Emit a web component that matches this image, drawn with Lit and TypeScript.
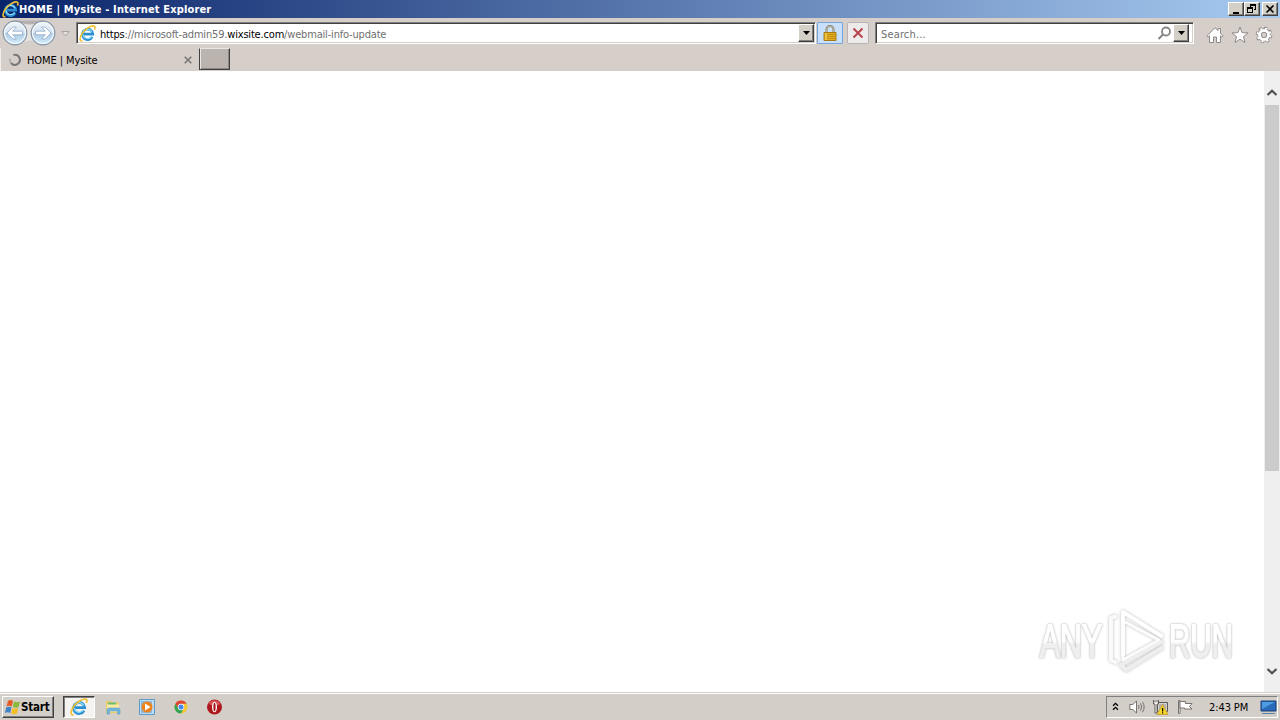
import { css, html, svg, LitElement } from 'lit'
import { customElement } from 'lit/decorators.js'

const ieLogo = (size: number) => html`
  <svg width=${size} height=${size} viewBox="0 0 18 18" fill="none">
    <path d="M14 12.500A5.500 5.500 0 1 1 14.600 9.600H5.200" stroke="#2a8fd0" stroke-width="2.800"/>
    <path d="M13.400 12A5 5 0 0 1 4.200 10.200M4.400 7.600A5 5 0 0 1 13.700 7.800" stroke="#8ad8f8" stroke-width="1.300"/>
    <path d="M3.600 16.800C.4 17.600.4 13.600 3 9.400 6.200 4.200 12.800.3 15.800 1.100c1.500.4 1.400 2 .5 3.800" stroke="#f0c132" stroke-width="1.700"/>
  </svg>`

const downArrow = html`<svg width="7" height="4"><path d="M0 0h7L3.5 4z" fill="#000"/></svg>`

@customElement('title-bar')
export class TitleBar extends LitElement {
  static styles = css`
    :host {
      display: flex;
      align-items: center;
      height: 18px;
      padding: 0 2px 0 2px;
      box-sizing: border-box;
      background: linear-gradient(90deg, #0a246a, #a6caf0);
      color: #fff;
    }
    svg { display: block; flex: none; }
    .title {
      flex: 1;
      font-weight: bold;
      font-size: 11px;
      letter-spacing: 0.14px;
      white-space: pre;
    }
    .button {
      width: 16px;
      height: 14px;
      box-sizing: border-box;
      background: #d4d0c8;
      border: 1px solid;
      border-color: #fff #404040 #404040 #fff;
      box-shadow: inset -1px -1px #808080;
      display: grid;
      place-items: center;
    }
    .close { margin-left: 2px; }
  `
  render() {
    return html`
      ${ieLogo(17)}
      <span class="title">HOME | Mysite - Internet Explorer</span>
      <span class="button"><svg width="10" height="10"><path d="M2 8h6v2H2z"/></svg></span>
      <span class="button"><svg width="10" height="10" fill="none" stroke="#000" shape-rendering="crispEdges"><path d="M3.500 3V.5h5v5H7M3 1.500h6M.5 3.500h5v5h-5zM1 4.500h5"/></svg></span>
      <span class="button close"><svg width="10" height="10"><path d="M1.500 1.500l7 7m0-7l-7 7" stroke="#000" stroke-width="1.600"/></svg></span>`
  }
}

@customElement('nav-bar')
export class NavBar extends LitElement {
  static styles = css`
    :host {
      display: flex;
      align-items: flex-start;
      height: 30px;
      padding: 4px 0 0 2px;
      box-sizing: border-box;
      font-size: 11px;
      color: #6f6f6f;
    }
    svg { display: block; flex: none; }
    .arrows { margin-top: -3px; }
    .history { margin: 9px 6px 0 3px; }
    .field {
      display: flex;
      align-items: center;
      height: 22px;
      flex: none;
      box-sizing: border-box;
      background: #fff;
      border: 1px solid;
      border-color: #808080 #fff #fff #808080;
      box-shadow: inset 1px 1px #404040, inset -1px -1px #d4d0c8;
    }
    .address { width: 740px; padding: 0 1px 0 2px; }
    .url {
      flex: 1;
      margin-left: 4px;
      padding-top: 2px;
      letter-spacing: -0.18px;
      white-space: nowrap;
    }
    .url b { font-weight: normal; color: #000; }
    .drop {
      width: 16px;
      height: 18px;
      box-sizing: border-box;
      display: grid;
      place-items: center;
      background: #d4d0c8;
      border: 1px solid;
      border-color: #fff #404040 #404040 #fff;
      box-shadow: inset -1px -1px #808080;
    }
    .lock, .stop {
      display: grid;
      place-items: center;
      flex: none;
      box-sizing: border-box;
      height: 22px;
      border-radius: 1px;
    }
    .lock { width: 26px; margin-left: 1px; background: #c8e0fa; border: 1px solid #75a5db; }
    .stop { width: 22px; margin: 0 6px 0 4px; background: #edeaeb; border: 1px solid #b8b4b3; border-radius: 2px; }
    .search { width: 319px; padding: 0 4px 0 5px; }
    .hint { flex: 1; padding-top: 2px; letter-spacing: 0.15px; }
    .glass { margin-right: 1px; }
    .tools { display: flex; gap: 6.5px; margin: 4px 0 0 12px; }
  `
  // round glass button, cx is its centre within the pair
  roundButton(cx: number, flip: boolean) {
    return svg`
      <circle cx=${cx} cy="14" r="11.800" fill="url(#glass)" stroke="#8494a5" stroke-width="1.200"/>
      <circle cx=${cx} cy="14" r="10.500" fill="none" stroke="#f1f7fc" stroke-width="1.200"/>
      <path transform=${`translate(${cx} 14)${flip ? ' scale(-1 1)' : ''}`}
        d="M-8 0l6-6h3.400L-2.300-1.800H7.500v3.600H-2.300L1.400 6H-2z" fill="#fff" stroke="#8eabc9" stroke-width=".8"/>`
  }
  render() {
    return html`
      <svg class="arrows" width="56" height="28">
        <defs>
          <linearGradient id="glass" x1="0" y1="0" x2="0" y2="1">
            <stop offset="0" stop-color="#f3f7fb"/>
            <stop offset=".48" stop-color="#d2e0ef"/>
            <stop offset=".52" stop-color="#b1c9e2"/>
            <stop offset="1" stop-color="#d2effd"/>
          </linearGradient>
        </defs>
        <path d="M13 1.500h28v8H13z" fill="#b6b1b1"/>
        <path d="M20 4q8 3 15 0v20q-7-5-15 0z" fill="#e6e3e3"/>
        ${this.roundButton(13, false)}
        ${this.roundButton(41, true)}
      </svg>
      <svg class="history" width="9" height="6"><path d="M.8.5h7.400L4.500 5z" fill="#e4e0de" stroke="#aaa5a3"/></svg>
      <div class="field address">
        ${ieLogo(17)}
        <span class="url"><b>https</b>://microsoft-admin59.<b>wixsite.com</b>/webmail-info-update</span>
        <span class="drop">${downArrow}</span>
      </div>
      <span class="lock">
        <svg width="14" height="17">
          <path d="M3.500 8V4.500a3.500 3.500 0 0 1 7 0V8" fill="none" stroke="#827c63" stroke-width="2"/>
          <path d="M3.500 8V4.500a3.500 3.500 0 0 1 7 0V8" fill="none" stroke="#d2ceb4" stroke-width=".7"/>
          <path d="M1 7.500h12v8H1z" fill="#e4ae1d" stroke="#a67a12"/>
          <path d="M2 9.500h10M2 11.500h10M2 13.500h10" stroke="#b98513" stroke-width=".8"/>
          <path d="M3 8v7" stroke="#ffe27b"/>
        </svg>
      </span>
      <span class="stop">
        <svg width="12" height="12"><path d="M1.500 1.500l9 9m0-9l-9 9" stroke="#b9444d" stroke-width="2"/></svg>
      </span>
      <div class="field search">
        <span class="hint">Search...</span>
        <svg class="glass" width="15" height="15" fill="none" stroke="#858585"><circle cx="9" cy="5.500" r="4" stroke-width="1.800"/><path d="M6 8.500L1.500 13" stroke-width="2"/></svg>
        <span class="drop">${downArrow}</span>
      </div>
      <div class="tools">
        <svg width="18" height="18" fill="#fff" stroke="#8e8a89"><path d="M1 9.800L9 1.700l3 2.900V2.500h2.500v4.700L17 9.800l-1.200 1.200-1.300-1.200v6.700h-4V11h-3v5.500h-4V9.800L2.200 11z"/></svg>
        <svg width="18" height="18" fill="#fff" stroke="#8e8a89"><path d="M9 1.200l2.100 5.500 6 .2-4.700 3.700 1.600 5.900L9 13.200l-5 3.300 1.600-5.900L.9 6.900l6-.2z"/></svg>
        <svg width="18" height="18" fill="none">
          <circle cx="9" cy="9" r="6.600" stroke="#8e8a89" stroke-width="3.400" stroke-dasharray="2.900 2.280"/>
          <circle cx="9" cy="9" r="4.900" stroke="#8e8a89" stroke-width="3.600"/>
          <circle cx="9" cy="9" r="6.200" stroke="#fff" stroke-width="2.500" stroke-dasharray="1.900 2.970" stroke-dashoffset="-.3"/>
          <circle cx="9" cy="9" r="4.500" stroke="#fff" stroke-width="2.800"/>
          <circle cx="9" cy="9" r="2.700" stroke="#8e8a89" stroke-width=".9"/>
        </svg>
      </div>`
  }
}

@customElement('tab-strip')
export class TabStrip extends LitElement {
  static styles = css`
    :host {
      display: flex;
      height: 23px;
      box-sizing: border-box;
      font-size: 11px;
      color: #000;
    }
    svg { display: block; flex: none; }
    .tab {
      display: flex;
      align-items: center;
      width: 199px;
      box-sizing: border-box;
      padding: 1px 7px 0 8px;
      border-left: 1px solid #f2efed;
    }
    .name { flex: 1; margin-left: 6px; padding-top: 1px; letter-spacing: -0.1px; }
    .new {
      width: 31px;
      height: 22px;
      box-sizing: border-box;
      background: #bab3ae;
      border: 1px solid;
      border-color: #e9e6e4 #404040 #404040;
      box-shadow: inset 1px 0 #e9e6e4, inset -1px -1px #8c8784;
    }
  `
  render() {
    return html`
      <div class="tab">
        <svg width="12" height="14" fill="none" stroke-width="2"><path d="M4.500 2A5 5 0 1 1 2 10" stroke="#777"/><path d="M2 10A5 5 0 0 1 1.200 5.500" stroke="#b5b0ae"/></svg>
        <span class="name">HOME | Mysite</span>
        <svg width="8" height="8"><path d="M.7.7l6.600 6.600m0-6.600L.7 7.300" stroke="#7c7775" stroke-width="1.600"/></svg>
      </div>
      <span class="new"></span>`
  }
}

@customElement('page-view')
export class PageView extends LitElement {
  static styles = css`
    :host {
      position: relative;
      display: flex;
      justify-content: flex-end;
      background: #fff;
    }
    svg { display: block; }
    .scrollbar {
      display: flex;
      flex-direction: column;
      align-items: center;
      width: 16px;
      box-sizing: border-box;
      background: #efefef;
      padding: 18px 0 17px;
    }
    .thumb { width: 14px; height: 366px; margin-top: 9px; background: #cbcbcb; }
    .down { margin-top: auto; }
    .watermark {
      position: absolute;
      right: 33px;
      bottom: 13px;
    }
    .letters {
      font: 47px 'Liberation Sans', sans-serif;
      fill: url(#fade);
      stroke: url(#fade);
      stroke-width: 1.8;
    }
    .play { filter: drop-shadow(0 0 1.5px #b8b8b8); }
    .soft { filter: drop-shadow(0 0 1.3px #a8a8a8); }
  `
  render() {
    return html`
      <svg class="watermark" width="220" height="76">
        <defs>
          <linearGradient id="fade" x1="0" y1="0" x2="0" y2="1">
            <stop offset=".52" stop-color="#fff"/>
            <stop offset=".56" stop-color="#efefef"/>
          </linearGradient>
        </defs>
        <g class="soft">
          <text class="letters" transform="translate(13 54) scale(.62 1)" textLength="100" lengthAdjust="spacingAndGlyphs">ANY</text>
          <text class="letters" transform="translate(142 54) scale(.62 1)" textLength="103" lengthAdjust="spacingAndGlyphs">RUN</text>
        </g>
        <g class="play" fill="none" stroke-width="4" stroke-linejoin="round">
          <path d="M90 13l-6 2v42l6 3" stroke="#fafafa"/>
          <path d="M96 53V9l40 25" stroke="#fff"/>
          <path d="M96 18l36 19-36 20z" stroke="#fdfdfd" stroke-width="3"/>
          <path d="M136 38L94 62l5 5 37-23" stroke="#eee"/>
        </g>
      </svg>
      <div class="scrollbar">
        <svg width="12" height="7" fill="none" stroke="#505050" stroke-width="2.200"><path d="M1.500 6L6 1.700 10.500 6"/></svg>
        <span class="thumb"></span>
        <svg class="down" width="12" height="7" fill="none" stroke="#505050" stroke-width="2.200"><path d="M1.500 1L6 5.300 10.500 1"/></svg>
      </div>`
  }
}

@customElement('task-bar')
export class TaskBar extends LitElement {
  static styles = css`
    :host {
      display: flex;
      align-items: flex-start;
      height: 28px;
      padding: 4px 2px 0;
      box-sizing: border-box;
      border-top: 1px solid #d4d0c8;
      box-shadow: inset 0 1px #fff;
      background: #d4cec8;
      font-size: 11px;
      color: #000;
    }
    svg { display: block; flex: none; }
    .start {
      display: flex;
      align-items: center;
      width: 52px;
      height: 22px;
      margin-top: -1px;
      padding-left: 1px;
      box-sizing: border-box;
      border: 1px solid;
      border-color: #fff #404040 #404040 #fff;
      box-shadow: inset -1px -1px #808080;
      font-weight: bold;
      font-size: 11.5px;
      letter-spacing: -0.2px;
    }
    .active {
      display: grid;
      place-items: center;
      width: 32px;
      height: 22px;
      margin: -1px 0 0 9px;
      box-sizing: border-box;
      background: #f5f3f2;
      border: 1px solid;
      border-color: #404040 #fff #fff #404040;
      box-shadow: inset 1px 1px #808080;
    }
    .pinned { display: flex; gap: 18px; margin: 2px auto 0 10px; }
    .tray {
      display: flex;
      align-items: center;
      width: 172px;
      height: 22px;
      margin-top: -1px;
      padding: 0 0 0 5px;
      box-sizing: border-box;
      border: 1px solid;
      border-color: #808080 #fff #fff #808080;
    }
    .chevrons { margin-bottom: 2px; }
    .speaker { margin-left: 10px; }
    .network { margin-left: 7px; }
    .flag { margin-left: 8px; }
    .clock { margin: 0 auto 0 16px; letter-spacing: -0.1px; white-space: nowrap; }
  `
  render() {
    return html`
      <div class="start">
        <svg width="17" height="17">
          <path d="M4 2Q6 0 9 2L7.800 7.500Q5 6 2.500 7.500z" fill="#e65a25"/>
          <path d="M10 2.500Q13 4 16 2.300L14.500 8Q12 9.500 8.800 7.800z" fill="#8ab83b"/>
          <path d="M2.200 8.500Q5 7 7.500 8.500L6.200 14Q3.500 12.500 1 14z" fill="#3f83cb"/>
          <path d="M8.500 8.800Q11.500 10.500 14.200 9L13 14.500Q10 16 7.200 14.300z" fill="#f5bd28"/>
        </svg>
        Start
      </div>
      <div class="active">${ieLogo(18)}</div>
      <div class="pinned">
        <svg width="16" height="16">
          <path d="M1 2h5l1 1.500h7V14H1z" fill="#e9cd69"/>
          <path d="M3 3.500h8V6H3z" fill="#68bd70"/>
          <path d="M2 5.500h12V13H2z" fill="#f9e9a5"/>
          <path d="M2 15v-4q0-2 2-2h9q2 0 2 2v4h-2.500v-3h-8v3z" fill="#72b7df" stroke="#4b94c3" stroke-width=".5"/>
        </svg>
        <svg width="16" height="16">
          <path d="M.5.500h15v15H.5z" fill="#bfdcf2" stroke="#5a9bca"/>
          <path d="M2 2h11v12H2z" fill="#8cb9dc"/>
          <circle cx="8" cy="8" r="5.500" fill="#ee831c"/>
          <path d="M6 4.500L11.500 8 6 11.500z" fill="#fff"/>
        </svg>
        <svg width="16" height="16">
          <circle cx="8" cy="8" r="6.500" fill="#f5c934"/>
          <path d="M2.370 4.750A6.500 6.500 0 0 1 13.630 4.750H8L5.200 9.600z" fill="#dc4637"/>
          <path d="M2.370 4.750A6.500 6.500 0 0 0 8 14.500L10.800 9.600H5.200z" fill="#35a357"/>
          <circle cx="8" cy="8" r="3.200" fill="#fff"/>
          <circle cx="8" cy="8" r="2.500" fill="#4385e8"/>
        </svg>
        <svg width="16" height="16">
          <circle cx="7.500" cy="8" r="7.500" fill="#ad171d"/>
          <path d="M1.500 5a6.700 6.700 0 0 1 12 0Q7.500 8 1.500 5z" fill="#d55356"/>
          <ellipse cx="7.500" cy="8" rx="2.500" ry="5.300" fill="#fff"/>
          <ellipse cx="7.500" cy="8" rx="1.100" ry="4.300" fill="#a5151b"/>
        </svg>
      </div>
      <div class="tray">
        <svg class="chevrons" width="7" height="9" fill="none" stroke="#000" stroke-width="1.300"><path d="M1 3.800L3.500 1.300 6 3.800M1 7.800l2.500-2.500L6 7.800"/></svg>
        <svg class="speaker" width="16" height="16" fill="none" stroke="#77726f"><path d="M.8 5.500h3L7.500 2v12L3.800 10.500h-3z" fill="#fff"/><path d="M9.500 6q1.300 2 0 4M11.500 4.300q2.500 3.700 0 7.400M13.500 2.800q3.300 5.200 0 10.400"/></svg>
        <svg class="network" width="17" height="16">
          <path d="M5.500 3.500h10v9h-10z" fill="#d5d3d0" stroke="#5b5855"/>
          <path d="M7 5h7v6H7z" fill="#b8b5b0"/>
          <path d="M1.500 1v4h1.500v9h2V5h1.500V1M3 1v2.500M5 1v2.500" fill="#fff" stroke="#615d5a"/>
          <path d="M10.500 5.500l5.500 10H5z" fill="#f8d82e" stroke="#b9941d" stroke-width=".7"/>
          <path d="M10 9h1.200v3.500H10zM10 13.300h1.200v1.200H10z"/>
        </svg>
        <svg class="flag" width="16" height="16" fill="#fff" stroke="#77726f"><path d="M1.500 1.500h1.500v13H1.500z"/><path d="M3 2.500h5.500v2H15l-2.500 3 2.500 2.500H7.500v-1H3z"/></svg>
        <span class="clock">2:43 PM</span>
        <svg width="17" height="15">
          <path d="M1 1h15v10H1z" fill="#286bb8" stroke="#173f75"/>
          <path d="M2 2h13L2 9z" fill="#4d9be1"/>
          <path d="M2 13.500h13" stroke="#5c83aa"/>
        </svg>
      </div>`
  }
}

@customElement('app-root')
export class AppRoot extends LitElement {
  static styles = css`
    :host {
      display: grid;
      grid-template-columns: minmax(0, 1fr);
      grid-template-rows: 18px 30px 23px 1fr 28px;
      height: 720px;
      overflow: hidden;
      background: #d6cec9;
      font-family: 'DejaVu Sans Condensed', 'DejaVu Sans', sans-serif;
      font-stretch: condensed;
    }
  `
  render() {
    return html`
      <title-bar></title-bar>
      <nav-bar></nav-bar>
      <tab-strip></tab-strip>
      <page-view></page-view>
      <task-bar></task-bar>`
  }
}
